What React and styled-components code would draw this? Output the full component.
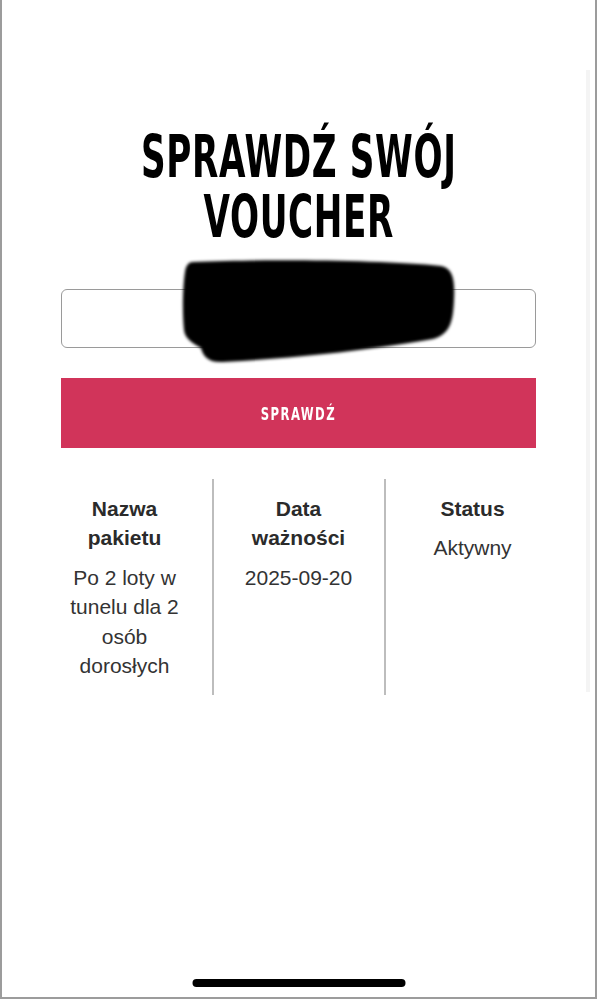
import styled, { createGlobalStyle } from "styled-components";

const GlobalStyle = createGlobalStyle`
  * { box-sizing: border-box; }
  html, body { margin: 0; padding: 0; background: #ffffff; }
  body { font-family: "Liberation Sans", Arial, sans-serif; }
`;

const columns = [
  { title: "Nazwa pakietu", value: "Po 2 loty w tunelu dla 2 osób dorosłych" },
  { title: "Data ważności", value: "2025-09-20" },
  { title: "Status", value: "Aktywny" },
];

const App = () => {
  return (
    <>
      <GlobalStyle />
      <Screen>
        <ScrollThumb />
        <Content>
          <Title>
            SPRAWDŹ SWÓJ
            <br />
            VOUCHER
          </Title>
          <InputWrap>
            <CodeInput type="text" />
            <Redaction viewBox="-4 -4 280 111" aria-hidden="true">
              <defs>
                <filter id="soft">
                  <feGaussianBlur stdDeviation="1.6" />
                </filter>
              </defs>
              <path
                filter="url(#soft)"
                d="M10 2 C80 -1 200 0 258 6 C270 8 272 20 271 40 C270 60 268 74 250 79 C200 88 120 98 40 102 C25 103 20 96 18 88 C12 84 2 80 1 70 C-1 50 0 25 2 12 C3 5 6 2 10 2 Z"
                fill="#000"
              />
            </Redaction>
          </InputWrap>
          <CheckButton>
            <ButtonLabel>SPRAWDŹ</ButtonLabel>
          </CheckButton>
          <Table>
            {columns.map((c, i) => (
              <Column key={c.title} $middle={i === 1}>
                <Head>{c.title}</Head>
                <Value>{c.value}</Value>
              </Column>
            ))}
          </Table>
        </Content>
        <HomeBar />
      </Screen>
    </>
  );
};

export default App;

const Screen = styled.div`
  position: relative;
  width: 597px;
  height: 999px;
  border-left: 2px solid #9c9c9c;
  border-right: 2px solid #9c9c9c;
  border-bottom: 2px solid #9c9c9c;
  display: flex;
  flex-direction: column;
  align-items: center;
  overflow: hidden;
`;

const ScrollThumb = styled.div`
  position: absolute;
  top: 70px;
  right: 5px;
  width: 4px;
  height: 622px;
  background: #f4f4f4;
`;

const Content = styled.div`
  width: 475px;
  padding-top: 127px;
  display: flex;
  flex-direction: column;
  align-items: stretch;
`;

const Title = styled.h1`
  align-self: center;
  width: max-content;
  margin: 0;
  font-family: "DejaVu Sans Condensed", "DejaVu Sans", sans-serif;
  font-weight: 700;
  font-size: 58px;
  line-height: 60px;
  letter-spacing: 1px;
  white-space: nowrap;
  color: #000;
  text-align: center;
  transform: scaleX(0.655);
`;

const InputWrap = styled.div`
  position: relative;
  margin-top: 42px;
`;

const CodeInput = styled.input`
  display: block;
  width: 100%;
  height: 59px;
  border: 1px solid #9a9a9a;
  border-radius: 6px;
  background: #fff;
  font-size: 18px;
  outline: none;
`;

const Redaction = styled.svg`
  position: absolute;
  left: 118px;
  top: -33px;
  width: 280px;
  height: 111px;
`;

const CheckButton = styled.button`
  margin-top: 30px;
  height: 70px;
  border: none;
  background: #d1345a;
  color: #fff;
  display: flex;
  align-items: center;
  justify-content: center;
  cursor: pointer;
`;

const ButtonLabel = styled.span`
  display: inline-block;
  font-family: "DejaVu Sans Condensed", "DejaVu Sans", sans-serif;
  font-size: 18px;
  font-weight: 700;
  letter-spacing: 2px;
  transform: scaleX(0.72);
`;

const Table = styled.div`
  margin: 31px -23.5px 0;
  display: grid;
  grid-template-columns: repeat(3, 1fr);
  color: #333;
`;

const Column = styled.div`
  padding: 15px 20px;
  text-align: center;
  border-left: ${(p) => (p.$middle ? "2px solid #bdbdbd" : "none")};
  border-right: ${(p) => (p.$middle ? "2px solid #bdbdbd" : "none")};
`;

const Head = styled.div`
  font-weight: 700;
  font-size: 21px;
  line-height: 29.4px;
  color: #2b2b2b;
`;

const Value = styled.div`
  margin-top: 10px;
  font-size: 21px;
  line-height: 29.4px;
`;

const HomeBar = styled.div`
  position: absolute;
  bottom: 10px;
  left: 50%;
  transform: translateX(-50%);
  width: 213px;
  height: 8px;
  border-radius: 4px;
  background: #000;
`;
